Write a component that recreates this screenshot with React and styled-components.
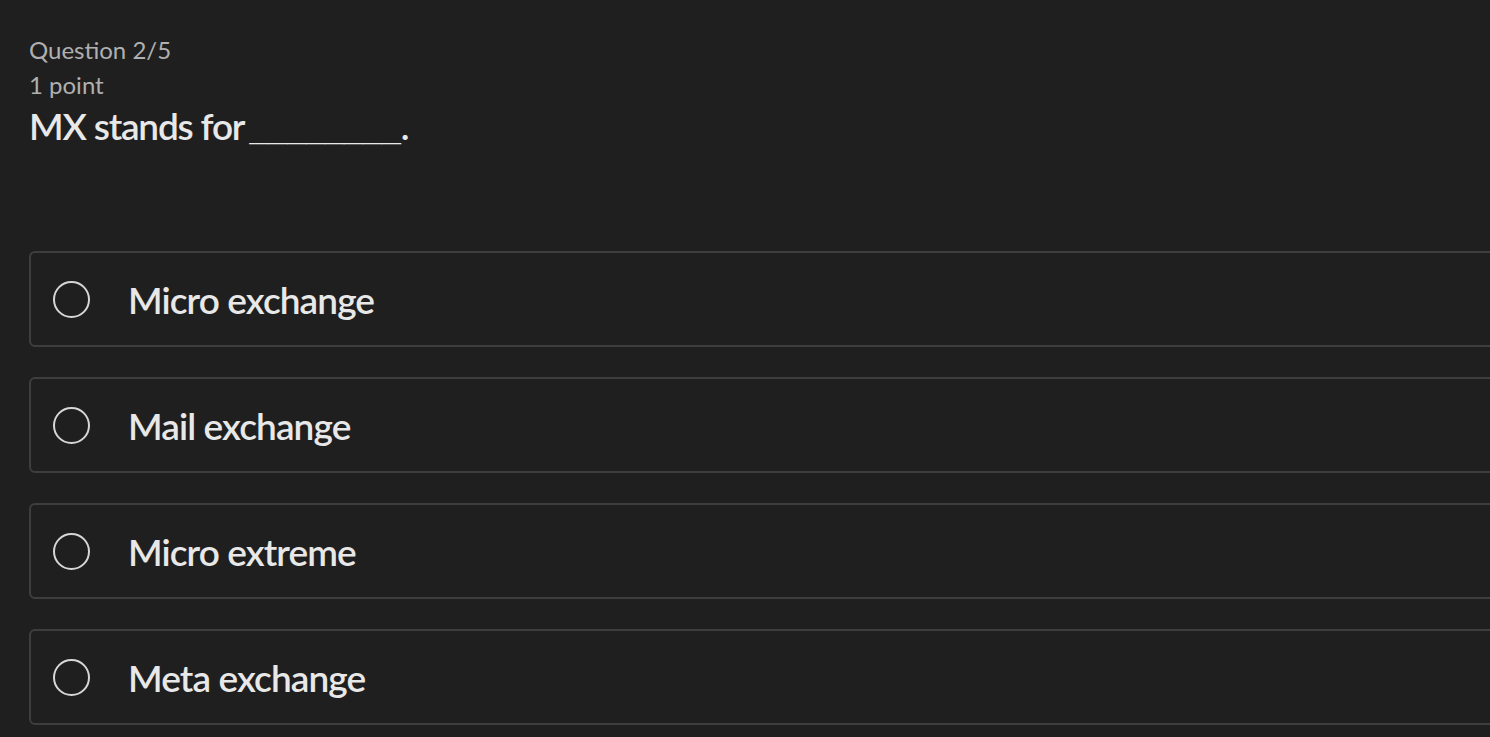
import React from 'react'
import styled, { createGlobalStyle } from "styled-components";

const GlobalStyle = createGlobalStyle`
  html, body {
    margin: 0;
    padding: 0;
    background: #1f1f1f;
    overflow: hidden;
  }
  body {
    font-family: 'Lato', 'Noto Sans', sans-serif;
  }
`

const options = ["Micro exchange", "Mail exchange", "Micro extreme", "Meta exchange"]

const App = () => {
    return (
        <>
        <GlobalStyle />
        <Page>
            <Meta>Question 2/5</Meta>
            <Meta>1 point</Meta>
            <Prompt>MX stands for <Blank>________</Blank>.</Prompt>
            <OptionList>
                {options.map((opt) => (
                    <Option key={opt}>
                        <Radio />
                        <OptionLabel>{opt}</OptionLabel>
                    </Option>
                ))}
            </OptionList>
        </Page>
        </>
    )
}

export default App

const Page = styled.div`
  padding: 32px 0 0 29px;
  width: 1540px;
  color: #e6e6e6;
`

const Meta = styled.div`
  font-size: 24px;
  line-height: 35px;
  color: #b0b0b0;
`

const Prompt = styled.div`
  font-size: 37px;
  font-weight: 600;
  line-height: 48px;
  height: 48px;
  color: #e8e8e8;
  letter-spacing: -1.2px;
`

const Blank = styled.span`
  font-family: 'Liberation Sans', Arial, sans-serif;
  font-size: 34px;
  font-weight: 700;
  letter-spacing: 0;
  margin-left: -2px;
`

const OptionList = styled.div`
  display: flex;
  flex-direction: column;
  gap: 30px;
  margin-top: 101px;
`

const Option = styled.label`
  display: flex;
  align-items: center;
  height: 92px;
  border: 2px solid #3e3e3e;
  border-radius: 6px;
  padding-left: 22px;
  cursor: pointer;
`

const Radio = styled.span`
  width: 33px;
  height: 33px;
  border: 2px solid #d6d6d6;
  border-radius: 50%;
  flex-shrink: 0;
`

const OptionLabel = styled.span`
  margin-left: 38px;
  font-size: 37px;
  font-weight: 600;
  color: #e8e8e8;
  letter-spacing: -0.9px;
`
